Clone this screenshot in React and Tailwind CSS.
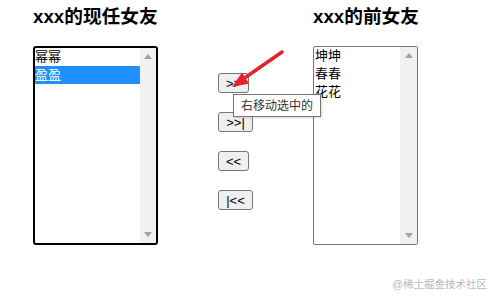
import React from "react";

const font = { fontFamily: '"Liberation Sans", "Noto Sans CJK SC", sans-serif' };

function Scrollbar({ w }) {
  return (
    <div className={`${w} h-full bg-[#f1f1f1] flex flex-col items-center justify-between py-[6px]`}>
      <svg width="8" height="5" viewBox="0 0 8 5"><polygon points="4,0 8,5 0,5" fill="#a3a3a3" /></svg>
      <svg width="8" height="5" viewBox="0 0 8 5"><polygon points="0,0 8,0 4,5" fill="#a3a3a3" /></svg>
    </div>
  );
}

function Btn({ children, w }) {
  return (
    <button className={`${w} h-[20px] bg-[#efefef] border border-[#767676] rounded-[3px] text-[13px] leading-none text-black flex items-center justify-center`}>
      {children}
    </button>
  );
}

export default function App() {
  return (
    <div className="relative w-[497px] h-[298px] bg-white overflow-hidden" style={font}>
      <div className="flex pl-[33px]">
        <div className="flex flex-col w-[125px]">
          <h3 className="pt-[7px] text-[18.72px] leading-[20px] font-bold text-black whitespace-nowrap">xxx的现任女友</h3>
          <div className="mt-[19px] w-[125px] h-[199px] border-2 border-black rounded-[3px] flex overflow-hidden">
            <div className="flex-1 flex flex-col text-[13px] leading-[18px]">
              <div className="h-[18px] text-black">幂幂</div>
              <div className="h-[18px] bg-[#1e90ff] text-white">盈盈</div>
            </div>
            <Scrollbar w="w-[16px]" />
          </div>
        </div>
        <div className="ml-[60px] w-[35px] pt-[73px] flex flex-col items-start gap-[19px]">
          <Btn w="w-[31px]">&gt;&gt;</Btn>
          <Btn w="w-[35px]">&gt;&gt;|</Btn>
          <Btn w="w-[31px]">&lt;&lt;</Btn>
          <Btn w="w-[35px]">|&lt;&lt;</Btn>
        </div>
        <div className="ml-[60px] flex flex-col w-[105px]">
          <h3 className="pt-[7px] text-[18.72px] leading-[20px] font-bold text-black whitespace-nowrap">xxx的前女友</h3>
          <div className="mt-[19px] w-[105px] h-[199px] border border-[#767676] rounded-[2px] flex overflow-hidden">
            <div className="flex-1 flex flex-col pl-[1px] text-[13px] leading-[18px] text-black">
              <div className="h-[18px]">坤坤</div>
              <div className="h-[18px]">春春</div>
              <div className="h-[18px]">花花</div>
            </div>
            <Scrollbar w="w-[17px]" />
          </div>
        </div>
      </div>

      <div className="absolute left-[233px] top-[94px] w-[88px] h-[23px] bg-white border border-[#767676] shadow-[1px_1px_2px_rgba(0,0,0,0.15)] flex items-center justify-center text-[12px] text-[#333]">
        右移动选中的
      </div>

      <svg className="absolute left-0 top-0" width="497" height="298" viewBox="0 0 497 298">
        <line x1="282" y1="52" x2="246" y2="77" stroke="#e62129" strokeWidth="3.5" strokeLinecap="round" />
        <polygon points="232,87 249,83.5 242,72.5" fill="#e62129" />
      </svg>

      <div className="absolute right-[10px] top-[277px] text-[10.5px] leading-[14px] text-[#b8b8b8]">@稀土掘金技术社区</div>
    </div>
  );
}
